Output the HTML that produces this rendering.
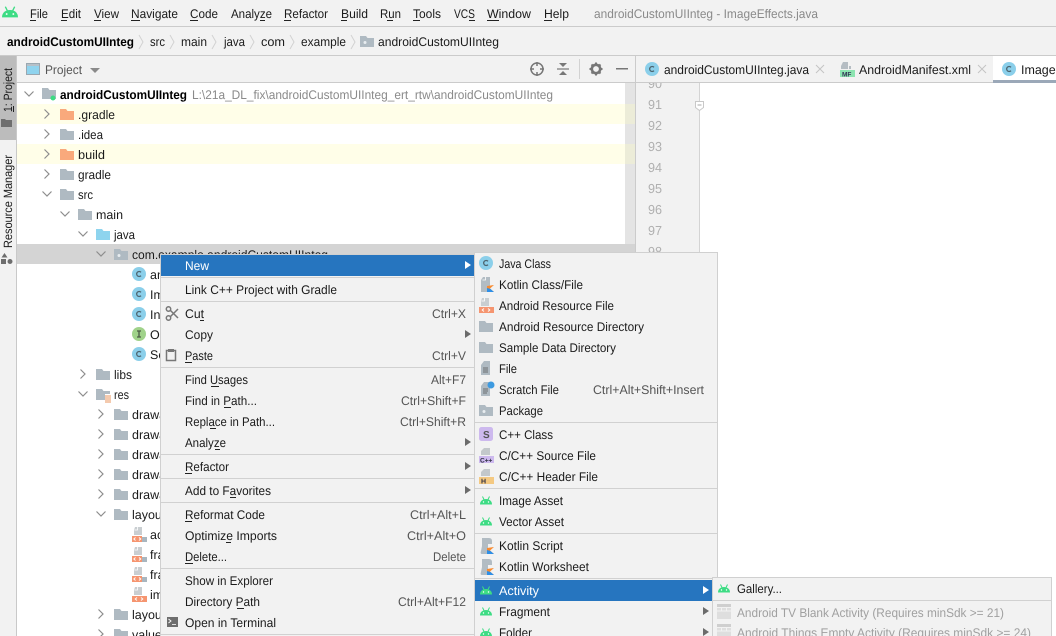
<!DOCTYPE html>
<html><head><meta charset="utf-8"><style>
html,body{margin:0;padding:0;background:#fff}
svg{display:block}
text{font-family:"Liberation Sans",sans-serif;font-size:12.5px;fill:#1a1a1a;white-space:pre;text-rendering:geometricPrecision}
.g{fill:#8a8a8a}.s{fill:#555}.d{fill:#a0a0a0}.w{fill:#fff}.n{fill:#b0b0b0;font-size:13px}.b{font-weight:bold;fill:#000}
</style></head><body>
<svg xmlns="http://www.w3.org/2000/svg" width="1056" height="636" viewBox="0 0 1056 636">
<defs>
<symbol id="fold" viewBox="0 0 14 11" width="14" height="11"><path d="M0 0h6l1.500 2H14v9H0z" fill="#afbac2"/></symbol>
<symbol id="oran" viewBox="0 0 14 11" width="14" height="11"><path d="M0 0h6l1.500 2H14v9H0z" fill="#f9a97c"/></symbol>
<symbol id="blue" viewBox="0 0 14 11" width="14" height="11"><path d="M0 0h6l1.500 2H14v9H0z" fill="#8ed4ee"/></symbol>
<symbol id="pack" viewBox="0 0 14 11" width="14" height="11"><path d="M0 0h6l1.500 2H14v9H0z" fill="#afbac2"/><circle cx="5" cy="6.500" r="1.500" fill="#e8edf0"/></symbol>
<symbol id="cc" viewBox="0 0 14 14" width="14" height="14"><circle cx="7" cy="7" r="7" fill="#8bcfea"/><path d="M9 5.300A2.500 2.500 0 1 0 9 8.700" fill="none" stroke="#4d6570" stroke-width="1.300"/></symbol>
<symbol id="ii" viewBox="0 0 14 14" width="14" height="14"><circle cx="7" cy="7" r="7" fill="#a0d28a"/><path d="M5 4h4M5 10h4M7 4v6" fill="none" stroke="#4b5b45" stroke-width="1.300"/></symbol>
<symbol id="xml" viewBox="0 0 15 16" width="15" height="16"><path d="M3 0h7v8H2V3z" fill="#c9ced1"/><path d="M2.500 3h3V0" fill="none" stroke="#fff" stroke-width=".8"/><path d="M0 9h15v6H0z" fill="#f59570"/><path d="M5 10.500 3.200 12 5 13.500M9 10.500 10.800 12 9 13.500" fill="none" stroke="#fff" stroke-width=".9"/></symbol>
<symbol id="xmlb" viewBox="0 0 15 16" width="15" height="16"><path d="M3 0h7v8H2V3z" fill="#c9ced1"/><path d="M2.500 3h3V0" fill="none" stroke="#fff" stroke-width=".8"/><path d="M0 9h10v6H0z" fill="#f59570"/><path d="M10 10h5v5h-5z" fill="#a9b6bf"/><path d="M3.500 10.500 1.800 12 3.500 13.500M7 10.500 8.700 12 7 13.500" fill="none" stroke="#fff" stroke-width=".9"/></symbol>
<symbol id="droid" viewBox="0 0 12 9" width="12" height="9"><path d="M0 8.500C0 5 2.500 3 6 3s6 2 6 5.500z" fill="#3ddc84"/><path d="M2.500 .5 4 3.500M9.500 .5 8 3.500" stroke="#3ddc84" stroke-width="1"/><circle cx="3.500" cy="6" r=".7" fill="#fff"/><circle cx="8.500" cy="6" r=".7" fill="#fff"/></symbol>
<symbol id="kfile" viewBox="0 0 15 15" width="15" height="15"><path d="M3 0h7v15H1V3z" fill="#b2bcc3"/><path d="M2.500 3h3V0" fill="none" stroke="#fff" stroke-width=".8"/><path d="M7 15V9l7-1-4 3.500 4 3.500z" fill="#f88a2e"/><path d="M7 15v-4l3.500 1 3.500 3z" fill="#2d8fe8"/></symbol>
<symbol id="kscr" viewBox="0 0 15 16" width="15" height="16"><path d="M2 0h7q3 0 3 3v3H8v10H2q-2 0-1-3l1-5z" fill="#b2bcc3"/><path d="M7 16v-6l7-1-4 3.500 4 3.500z" fill="#f88a2e"/><path d="M7 16v-4l3.500 1 3.500 3z" fill="#2d8fe8"/></symbol>
<symbol id="tpl" viewBox="0 0 14 15" width="14" height="15"><path d="M0 0h14v3H0z" fill="#cfcfcf"/><path d="M0 4h14v11H0z" fill="#dedede"/><path d="M0 7h14M4.500 4v3M9.500 4v3" stroke="#f2f2f2" stroke-width="1"/></symbol>
<symbol id="tri" viewBox="0 0 6 8" width="6" height="8"><path d="M0 0l6 4-6 4z" fill="#6b6b6b"/></symbol>
<symbol id="triw" viewBox="0 0 6 8" width="6" height="8"><path d="M0 0l6 4-6 4z" fill="#fff"/></symbol>
<symbol id="chr" viewBox="0 0 8 10" width="8" height="10"><path d="M1.500 .5 6 5 1.500 9.500" fill="none" stroke="#8d8d8d" stroke-width="1.200"/></symbol>
<symbol id="chd" viewBox="0 0 10 8" width="10" height="8"><path d="M.5 1.500 5 6l4.500-4.500" fill="none" stroke="#8d8d8d" stroke-width="1.200"/></symbol>
</defs>

<rect width="1056" height="636" fill="#fff"/>
<!-- menu bar -->
<rect width="1056" height="55" fill="#f2f2f2"/>
<rect y="26" width="1056" height="1" fill="#cbcbcb"/>
<rect y="55" width="1056" height="1" fill="#cbcbcb"/>
<use href="#droid" x="2" y="6" width="16" height="12"/>
<text x="30" y="18" textLength="18" lengthAdjust="spacingAndGlyphs">File</text><rect x="30" y="20" width="6" height="1" fill="#222"/>
<text x="61" y="18" textLength="20" lengthAdjust="spacingAndGlyphs">Edit</text><rect x="61" y="20" width="6" height="1" fill="#222"/>
<text x="94" y="18" textLength="25" lengthAdjust="spacingAndGlyphs">View</text><rect x="94" y="20" width="7" height="1" fill="#222"/>
<text x="131" y="18" textLength="47" lengthAdjust="spacingAndGlyphs">Navigate</text><rect x="131" y="20" width="9" height="1" fill="#222"/>
<text x="190" y="18" textLength="28" lengthAdjust="spacingAndGlyphs">Code</text><rect x="190" y="20" width="8" height="1" fill="#222"/>
<text x="231" y="18" textLength="41" lengthAdjust="spacingAndGlyphs">Analyze</text><rect x="260" y="20" width="5" height="1" fill="#222"/>
<text x="284" y="18" textLength="44" lengthAdjust="spacingAndGlyphs">Refactor</text><rect x="284" y="20" width="7" height="1" fill="#222"/>
<text x="341" y="18" textLength="27" lengthAdjust="spacingAndGlyphs">Build</text><rect x="341" y="20" width="6" height="1" fill="#222"/>
<text x="380" y="18" textLength="21" lengthAdjust="spacingAndGlyphs">Run</text><rect x="387" y="20" width="6" height="1" fill="#222"/>
<text x="413" y="18" textLength="28" lengthAdjust="spacingAndGlyphs">Tools</text><rect x="413" y="20" width="7" height="1" fill="#222"/>
<text x="454" y="18" textLength="21" lengthAdjust="spacingAndGlyphs">VCS</text><rect x="469" y="20" width="6" height="1" fill="#222"/>
<text x="487" y="18" textLength="44" lengthAdjust="spacingAndGlyphs">Window</text><rect x="487" y="20" width="12" height="1" fill="#222"/>
<text x="544" y="18" textLength="25" lengthAdjust="spacingAndGlyphs">Help</text><rect x="544" y="20" width="8" height="1" fill="#222"/>
<text x="594" y="18" textLength="224" lengthAdjust="spacingAndGlyphs" class="g">androidCustomUIInteg - ImageEffects.java</text>

<!-- breadcrumb -->
<text x="7" y="46" textLength="127" lengthAdjust="spacingAndGlyphs" class="b">androidCustomUIInteg</text>
<text x="150" y="46" textLength="15" lengthAdjust="spacingAndGlyphs">src</text>
<text x="181" y="46" textLength="26" lengthAdjust="spacingAndGlyphs">main</text>
<text x="224" y="46" textLength="21" lengthAdjust="spacingAndGlyphs">java</text>
<text x="261" y="46" textLength="24" lengthAdjust="spacingAndGlyphs">com</text>
<text x="301" y="46" textLength="45" lengthAdjust="spacingAndGlyphs">example</text>
<text x="378" y="46" textLength="121" lengthAdjust="spacingAndGlyphs">androidCustomUIInteg</text>
<path d="M139 35l4 7-4 7M170 35l4 7-4 7M212 35l4 7-4 7M250 35l4 7-4 7M290 35l4 7-4 7M351 35l4 7-4 7" fill="none" stroke="#d2d2d2"/>
<use href="#pack" x="360" y="36"/>

<!-- left strip -->
<rect y="56" width="16" height="580" fill="#f2f2f2"/>
<rect x="16" y="56" width="1" height="580" fill="#c9c9c9"/>
<rect y="56" width="16" height="84" fill="#bcbcbc"/>
<text transform="translate(12,112) rotate(-90)" textLength="44" lengthAdjust="spacingAndGlyphs" style="font-size:12px">1: Project</text>
<rect x="13" y="106" width="1" height="6" fill="#222"/>
<path d="M1 119h4l1 1h6v7H1z" fill="#6e6e6e"/>
<text transform="translate(12,248) rotate(-90)" textLength="93" lengthAdjust="spacingAndGlyphs" style="font-size:12px">Resource Manager</text>
<path d="M4.500 253l3 4.500h-6zM1 259h5v5H1z" fill="#6e6e6e"/><circle cx="10" cy="261.500" r="2.500" fill="#6e6e6e"/>

<!-- project header -->
<rect x="17" y="56" width="619" height="26" fill="#f2f2f2"/>
<rect x="17" y="82" width="619" height="1" fill="#cbcbcb"/>
<rect x="26.500" y="63.500" width="13" height="11" fill="#8fd3ee" stroke="#9aa7b0"/>
<rect x="27" y="64" width="12" height="2" fill="#b5c0c8"/>
<text x="45" y="74" textLength="37" lengthAdjust="spacingAndGlyphs" class="s">Project</text>
<path d="M90 68h10l-5 5z" fill="#8a8a8a"/>
<circle cx="537" cy="69" r="6" fill="none" stroke="#777" stroke-width="1.500"/>
<path d="M537 62v4M537 72v4M530 69h4M540 69h4" stroke="#777" stroke-width="1.500"/>
<path d="M557 69h12" stroke="#777" stroke-width="1.200"/>
<path d="M559 63h8l-4 4zM559 75h8l-4-4z" fill="#777"/>
<rect x="579" y="59" width="1" height="20" fill="#d2d2d2"/>
<circle cx="596" cy="69" r="4.200" fill="none" stroke="#777" stroke-width="2.600"/>
<path d="M596 62.500v2.500M596 73v2.500M589.500 69h2.500M600 69h2.500M591.500 64.500l1.800 1.800M598.700 71.700l1.800 1.800M600.500 64.500l-1.800 1.800M593.300 71.700l-1.800 1.800" stroke="#777" stroke-width="2"/>
<rect x="616" y="68" width="12" height="1.500" fill="#777"/>
<rect x="635" y="56" width="1" height="580" fill="#cbcbcb"/>

<!-- tree backgrounds -->
<rect x="625" y="83" width="10" height="170" fill="#e4e4e4"/>
<rect x="17" y="104" width="608" height="20" fill="#fffee8"/>
<rect x="17" y="144" width="608" height="20" fill="#fffee8"/>
<rect x="625" y="104" width="10" height="20" fill="#ececd8"/>
<rect x="625" y="144" width="10" height="20" fill="#ececd8"/>
<rect x="17" y="244" width="618" height="20" fill="#d4d4d4"/>

<!-- tree -->
<use href="#chd" x="24" y="90"/>
<path d="M42 88h6l1.500 2H56v9H42z" fill="#afbac2"/><circle cx="53" cy="98" r="2.500" fill="#3ddc84"/>
<text x="60" y="99" textLength="127" lengthAdjust="spacingAndGlyphs" class="b">androidCustomUIInteg</text>
<text x="192" y="99" textLength="361" lengthAdjust="spacingAndGlyphs" class="g">L:\21a_DL_fix\androidCustomUIInteg_ert_rtw\androidCustomUIInteg</text>

<use href="#chr" x="43" y="109"/><use href="#oran" x="60" y="109"/><text x="78" y="119" textLength="37" lengthAdjust="spacingAndGlyphs">.gradle</text>
<use href="#chr" x="43" y="129"/><use href="#fold" x="60" y="129"/><text x="78" y="139" textLength="25" lengthAdjust="spacingAndGlyphs">.idea</text>
<use href="#chr" x="43" y="149"/><use href="#oran" x="60" y="149"/><text x="78" y="159" textLength="27" lengthAdjust="spacingAndGlyphs">build</text>
<use href="#chr" x="43" y="169"/><use href="#fold" x="60" y="169"/><text x="78" y="179" textLength="33" lengthAdjust="spacingAndGlyphs">gradle</text>
<use href="#chd" x="42" y="190"/><use href="#fold" x="60" y="189"/><text x="78" y="199" textLength="15" lengthAdjust="spacingAndGlyphs">src</text>
<use href="#chd" x="60" y="210"/><use href="#fold" x="78" y="209"/><text x="96" y="219" textLength="27" lengthAdjust="spacingAndGlyphs">main</text>
<use href="#chd" x="78" y="230"/><use href="#blue" x="96" y="229"/><text x="114" y="239" textLength="21" lengthAdjust="spacingAndGlyphs">java</text>
<use href="#chd" x="96" y="250"/><use href="#pack" x="114" y="249"/><text x="132" y="259" textLength="196" lengthAdjust="spacingAndGlyphs">com.example.androidCustomUIInteg</text>

<use href="#cc" x="132" y="267"/><text x="150" y="279">androidCustomUIInteg</text>
<use href="#cc" x="132" y="287"/><text x="150" y="299">ImageEffects</text>
<use href="#cc" x="132" y="307"/><text x="150" y="319">Integration</text>
<use href="#ii" x="132" y="327"/><text x="150" y="339">OnFragment</text>
<use href="#cc" x="132" y="347"/><text x="150" y="359">Settings</text>

<use href="#chr" x="79" y="369"/><use href="#fold" x="96" y="369"/><text x="114" y="379" textLength="18" lengthAdjust="spacingAndGlyphs">libs</text>
<use href="#chd" x="78" y="390"/><use href="#fold" x="96" y="389"/><text x="114" y="399" textLength="15" lengthAdjust="spacingAndGlyphs">res</text>
<path d="M105 394h6v10h-6z" fill="#fff"/><path d="M105 396h6M105 398h6M105 400h6M105 402h6" stroke="#e8955c"/>
<use href="#chr" x="97" y="409"/><use href="#fold" x="114" y="409"/><text x="132" y="419">drawable</text>
<use href="#chr" x="97" y="429"/><use href="#fold" x="114" y="429"/><text x="132" y="439">drawable</text>
<use href="#chr" x="97" y="449"/><use href="#fold" x="114" y="449"/><text x="132" y="459">drawable</text>
<use href="#chr" x="97" y="469"/><use href="#fold" x="114" y="469"/><text x="132" y="479">drawable</text>
<use href="#chr" x="97" y="489"/><use href="#fold" x="114" y="489"/><text x="132" y="499">drawable</text>
<use href="#chd" x="96" y="510"/><use href="#fold" x="114" y="509"/><text x="132" y="519">layout</text>
<use href="#xmlb" x="132" y="527"/><text x="150" y="539">activity</text>
<use href="#xmlb" x="132" y="547"/><text x="150" y="559">fragment</text>
<use href="#xmlb" x="132" y="567"/><text x="150" y="579">fragment</text>
<use href="#xml" x="132" y="587"/><text x="150" y="599">image</text>
<use href="#chr" x="97" y="609"/><use href="#fold" x="114" y="609"/><text x="132" y="619">layout</text>
<use href="#chr" x="97" y="629"/><use href="#fold" x="114" y="629"/><text x="132" y="639">values</text>

<!-- tabs -->
<rect x="636" y="56" width="420" height="26" fill="#f2f2f2"/>
<rect x="636" y="82" width="420" height="1" fill="#cbcbcb"/>
<use href="#cc" x="645" y="62"/>
<text x="664" y="74" textLength="145" lengthAdjust="spacingAndGlyphs">androidCustomUIInteg.java</text>
<path d="M816 65l8 8M824 65l-8 8M978 65l8 8M986 65l-8 8" stroke="#c4c4c4" stroke-width="1"/>
<path d="M843 62h5v7h-7v-3zM849 66h2v3h-2z" fill="#b5bdc3"/>
<rect x="840" y="70" width="15" height="7" fill="#8ce4b0"/>
<text x="842" y="76.500" style="font-size:6.500px;font-weight:bold;fill:#335">MF</text>
<text x="859" y="74" textLength="112" lengthAdjust="spacingAndGlyphs">AndroidManifest.xml</text>
<rect x="993" y="56" width="63" height="24" fill="#fff"/>
<rect x="993" y="80" width="63" height="3" fill="#9ba8b8"/>
<use href="#cc" x="1002" y="62"/>
<text x="1021" y="74" textLength="99" lengthAdjust="spacingAndGlyphs">ImageEffects.java</text>

<!-- gutter -->
<rect x="636" y="83" width="63" height="553" fill="#f2f2f2"/>
<rect x="699" y="83" width="1" height="553" fill="#d4d4d4"/>
<svg x="636" y="83" width="63" height="170"><text x="12" y="5" class="n" textLength="14" lengthAdjust="spacingAndGlyphs">90</text></svg>
<text x="648" y="109" class="n" textLength="14" lengthAdjust="spacingAndGlyphs">91</text>
<text x="648" y="130" class="n" textLength="14" lengthAdjust="spacingAndGlyphs">92</text>
<text x="648" y="151" class="n" textLength="14" lengthAdjust="spacingAndGlyphs">93</text>
<text x="648" y="172" class="n" textLength="14" lengthAdjust="spacingAndGlyphs">94</text>
<text x="648" y="193" class="n" textLength="14" lengthAdjust="spacingAndGlyphs">95</text>
<text x="648" y="214" class="n" textLength="14" lengthAdjust="spacingAndGlyphs">96</text>
<text x="648" y="235" class="n" textLength="14" lengthAdjust="spacingAndGlyphs">97</text>
<text x="648" y="256" class="n" textLength="14" lengthAdjust="spacingAndGlyphs">98</text>
<path d="M695.500 101.500h8v6l-4 3-4-3z" fill="#fff" stroke="#c8c8c8"/><path d="M697.500 105h4" stroke="#aaa"/>

<!-- context menu -->
<rect x="160.500" y="254.500" width="315" height="390" fill="#f2f2f2" stroke="#d0d0d0"/>
<rect x="161" y="255" width="314" height="21" fill="#2675bf"/>
<g fill="#d1d1d1">
<rect x="161" y="277" width="314" height="1"/><rect x="161" y="301" width="314" height="1"/><rect x="161" y="367" width="314" height="1"/><rect x="161" y="454" width="314" height="1"/><rect x="161" y="478" width="314" height="1"/><rect x="161" y="502" width="314" height="1"/><rect x="161" y="568" width="314" height="1"/><rect x="161" y="634" width="314" height="1"/>
</g>
<text x="185" y="270" textLength="24" lengthAdjust="spacingAndGlyphs" class="w">New</text><use href="#triw" x="465" y="261"/>
<text x="185" y="294" textLength="152" lengthAdjust="spacingAndGlyphs">Link C++ Project with Gradle</text>
<text x="185" y="318" textLength="19" lengthAdjust="spacingAndGlyphs">Cut</text><rect x="200" y="320" width="4" height="1" fill="#222"/><text x="432" y="318" textLength="34" lengthAdjust="spacingAndGlyphs" class="s">Ctrl+X</text>
<text x="185" y="339" textLength="28" lengthAdjust="spacingAndGlyphs">Copy</text><use href="#tri" x="465" y="330"/>
<text x="185" y="360" textLength="28" lengthAdjust="spacingAndGlyphs">Paste</text><rect x="185" y="362" width="7" height="1" fill="#222"/><text x="432" y="360" textLength="34" lengthAdjust="spacingAndGlyphs" class="s">Ctrl+V</text>
<text x="185" y="384" textLength="63" lengthAdjust="spacingAndGlyphs">Find Usages</text><rect x="211" y="386" width="8" height="1" fill="#222"/><text x="431" y="384" textLength="35" lengthAdjust="spacingAndGlyphs" class="s">Alt+F7</text>
<text x="185" y="405" textLength="72" lengthAdjust="spacingAndGlyphs">Find in Path...</text><rect x="224" y="407" width="7" height="1" fill="#222"/><text x="401" y="405" textLength="65" lengthAdjust="spacingAndGlyphs" class="s">Ctrl+Shift+F</text>
<text x="185" y="426" textLength="90" lengthAdjust="spacingAndGlyphs">Replace in Path...</text><rect x="210" y="428" width="6" height="1" fill="#222"/><text x="400" y="426" textLength="66" lengthAdjust="spacingAndGlyphs" class="s">Ctrl+Shift+R</text>
<text x="185" y="447" textLength="41" lengthAdjust="spacingAndGlyphs">Analyze</text><rect x="215" y="449" width="5" height="1" fill="#222"/><use href="#tri" x="465" y="438"/>
<text x="185" y="471" textLength="44" lengthAdjust="spacingAndGlyphs">Refactor</text><rect x="185" y="473" width="7" height="1" fill="#222"/><use href="#tri" x="465" y="462"/>
<text x="185" y="495" textLength="86" lengthAdjust="spacingAndGlyphs">Add to Favorites</text><rect x="230" y="497" width="6" height="1" fill="#222"/><use href="#tri" x="465" y="486"/>
<text x="185" y="519" textLength="80" lengthAdjust="spacingAndGlyphs">Reformat Code</text><rect x="185" y="521" width="7" height="1" fill="#222"/><text x="410" y="519" textLength="56" lengthAdjust="spacingAndGlyphs" class="s">Ctrl+Alt+L</text>
<text x="185" y="540" textLength="92" lengthAdjust="spacingAndGlyphs">Optimize Imports</text><rect x="226" y="542" width="5" height="1" fill="#222"/><text x="407" y="540" textLength="59" lengthAdjust="spacingAndGlyphs" class="s">Ctrl+Alt+O</text>
<text x="185" y="561" textLength="42" lengthAdjust="spacingAndGlyphs">Delete...</text><rect x="185" y="563" width="8" height="1" fill="#222"/><text x="433" y="561" textLength="33" lengthAdjust="spacingAndGlyphs" class="s">Delete</text>
<text x="185" y="585" textLength="88" lengthAdjust="spacingAndGlyphs">Show in Explorer</text>
<text x="185" y="606" textLength="75" lengthAdjust="spacingAndGlyphs">Directory Path</text><rect x="237" y="608" width="7" height="1" fill="#222"/><text x="398" y="606" textLength="68" lengthAdjust="spacingAndGlyphs" class="s">Ctrl+Alt+F12</text>
<text x="185" y="627" textLength="91" lengthAdjust="spacingAndGlyphs">Open in Terminal</text>
<!-- cut icon -->
<g fill="none" stroke="#777" stroke-width="1.500"><circle cx="168.500" cy="309" r="2.200"/><circle cx="168.500" cy="318" r="2.200"/><path d="M170.500 310.500 178 318M170.500 316.500 178 309"/></g>
<!-- paste icon -->
<path d="M168 350.500h-1.500v10h9v-10H174" fill="none" stroke="#777" stroke-width="1.500"/><rect x="168" y="349" width="6" height="3" fill="#777"/>
<!-- terminal icon -->
<rect x="167" y="617" width="11" height="10" fill="#6e6e6e"/><path d="M168.500 619l2.500 2-2.500 2" fill="none" stroke="#fff" stroke-width=".9"/><path d="M172 624.500h4" stroke="#fff" stroke-width=".8"/>

<!-- submenu 2 -->
<rect x="474.500" y="252.500" width="243" height="390" fill="#f2f2f2" stroke="#d0d0d0"/>
<g fill="#d1d1d1"><rect x="475" y="422" width="242" height="1"/><rect x="475" y="488" width="242" height="1"/><rect x="475" y="533" width="242" height="1"/><rect x="475" y="578" width="242" height="1"/></g>
<rect x="475" y="580" width="238" height="21" fill="#2675bf"/>
<use href="#cc" x="479" y="256"/><text x="499" y="268" textLength="52" lengthAdjust="spacingAndGlyphs">Java Class</text>
<use href="#kfile" x="480" y="277"/><text x="499" y="289" textLength="84" lengthAdjust="spacingAndGlyphs">Kotlin Class/File</text>
<use href="#xml" x="479" y="298"/><text x="499" y="310" textLength="115" lengthAdjust="spacingAndGlyphs">Android Resource File</text>
<use href="#fold" x="479" y="321"/><text x="499" y="331" textLength="145" lengthAdjust="spacingAndGlyphs">Android Resource Directory</text>
<use href="#fold" x="479" y="342"/><text x="499" y="352" textLength="117" lengthAdjust="spacingAndGlyphs">Sample Data Directory</text>
<path d="M484 361h6v14h-9v-10z" fill="#afbac2"/><path d="M483 368h5M483 370h5M483 372h5" stroke="#555" stroke-width=".8"/><text x="499" y="373" textLength="18" lengthAdjust="spacingAndGlyphs">File</text>
<path d="M484 382h6v14h-9v-10z" fill="#afbac2"/><path d="M483 389h5M483 391h5M483 393h4" stroke="#555" stroke-width=".8"/><circle cx="491" cy="385" r="3.500" fill="#3d9ae0"/><text x="499" y="394" textLength="60" lengthAdjust="spacingAndGlyphs">Scratch File</text>
<text x="593" y="394" textLength="111" lengthAdjust="spacingAndGlyphs" class="s">Ctrl+Alt+Shift+Insert</text>
<use href="#pack" x="479" y="405"/><text x="499" y="415" textLength="44" lengthAdjust="spacingAndGlyphs">Package</text>
<rect x="479" y="427" width="14" height="14" rx="2.500" fill="#cdb9ee"/><text x="483" y="438" style="font-size:10px;font-weight:bold;fill:#555">S</text><text x="499" y="439" textLength="54" lengthAdjust="spacingAndGlyphs">C++ Class</text>
<path d="M484 448h6v7h-9v-4z" fill="#c3c8cb"/><rect x="479" y="456" width="15" height="7" fill="#cdb9ee"/><text x="480" y="462.500" style="font-size:6.500px;font-weight:bold;fill:#334">C++</text><text x="499" y="460" textLength="97" lengthAdjust="spacingAndGlyphs">C/C++ Source File</text>
<path d="M484 469h6v7h-9v-4z" fill="#c3c8cb"/><rect x="479" y="477" width="15" height="7" fill="#f4c982"/><text x="481" y="483.500" style="font-size:7px;font-weight:bold;fill:#334">H</text><text x="499" y="481" textLength="99" lengthAdjust="spacingAndGlyphs">C/C++ Header File</text>
<use href="#droid" x="480" y="496"/><text x="499" y="505" textLength="64" lengthAdjust="spacingAndGlyphs">Image Asset</text>
<use href="#droid" x="480" y="517"/><text x="499" y="526" textLength="65" lengthAdjust="spacingAndGlyphs">Vector Asset</text>
<use href="#kscr" x="480" y="538"/><text x="499" y="550" textLength="64" lengthAdjust="spacingAndGlyphs">Kotlin Script</text>
<use href="#kscr" x="480" y="559"/><text x="499" y="571" textLength="90" lengthAdjust="spacingAndGlyphs">Kotlin Worksheet</text>
<use href="#droid" x="480" y="586"/><text x="499" y="595" textLength="40" lengthAdjust="spacingAndGlyphs" class="w">Activity</text><use href="#triw" x="703" y="586"/>
<use href="#droid" x="480" y="607"/><text x="499" y="616" textLength="51" lengthAdjust="spacingAndGlyphs">Fragment</text><use href="#tri" x="703" y="607"/>
<use href="#droid" x="480" y="628"/><text x="499" y="637" textLength="33" lengthAdjust="spacingAndGlyphs">Folder</text><use href="#tri" x="703" y="628"/>

<!-- submenu 3 -->
<rect x="712.500" y="577.500" width="339" height="70" fill="#f2f2f2" stroke="#d0d0d0"/>
<rect x="713" y="600" width="339" height="1" fill="#d1d1d1"/>
<use href="#droid" x="718" y="584"/><text x="737" y="593" textLength="45" lengthAdjust="spacingAndGlyphs">Gallery...</text>
<use href="#tpl" x="717" y="604"/><text x="737" y="617" textLength="267" lengthAdjust="spacingAndGlyphs" class="d">Android TV Blank Activity (Requires minSdk &gt;= 21)</text>
<use href="#tpl" x="717" y="624"/><text x="737" y="637" textLength="294" lengthAdjust="spacingAndGlyphs" class="d">Android Things Empty Activity (Requires minSdk &gt;= 24)</text>
</svg>
</body></html>
